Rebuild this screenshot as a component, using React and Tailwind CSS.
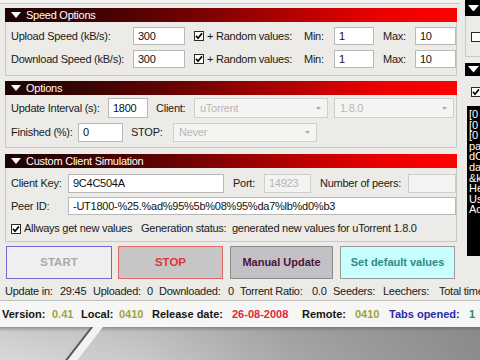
import React from "react";

const Tri = ({ size = 10 }) => (
  <svg width={size} height={size * 0.6} viewBox="0 0 10 6" className="shrink-0">
    <path d="M0 0H10L5 6Z" fill="#fff" />
  </svg>
);

const Check = ({ checked }) => (
  <div className="w-[10px] h-[10px] border border-[#2a2a2a] bg-white flex items-center justify-center shrink-0">
    {checked && (
      <svg width="8" height="8" viewBox="0 0 8 8">
        <path d="M1 3.8L3 6.2L7 1.4" stroke="#000" strokeWidth="1.7" fill="none" />
      </svg>
    )}
  </div>
);

const Header = ({ title }) => (
  <div className="h-[14px] flex items-center pl-[6px] gap-[5px] text-white bg-[linear-gradient(to_right,#1c0202_0%,#3a0303_18%,#6e0202_40%,#b00000_62%,#e80000_82%,#ff0000_100%)]">
    <Tri />
    <span className="leading-none">{title}</span>
  </div>
);

const Input = ({ w, h = 18, children, disabled }) => (
  <div
    className={
      "shrink-0 border flex items-center pl-[4px] leading-none " +
      (disabled
        ? "bg-[#f3f3f1] border-[#cfcfcf] text-[#b4b4b4]"
        : "bg-white border-[#b8b8b8] text-[#111]")
    }
    style={{ width: w, height: h }}
  >
    {children}
  </div>
);

const Select = ({ w, h = 19, children }) => (
  <div
    className="shrink-0 border border-[#d0d0d0] bg-[#f4f4f2] text-[#b8b8b8] flex items-center pl-[5px] pr-[6px] leading-none justify-between"
    style={{ width: w, height: h }}
  >
    <span>{children}</span>
    <svg width="5" height="3" viewBox="0 0 5 3">
      <path d="M0 0H5L2.5 3Z" fill="#a8a8a8" />
    </svg>
  </div>
);

const Lbl = ({ w, children, className = "" }) => (
  <span className={"shrink-0 leading-none whitespace-nowrap " + className} style={{ width: w }}>
    {children}
  </span>
);

const Body = ({ children, className = "" }) => (
  <div className={"border border-t-0 border-[#c9c8c4] bg-[#ecebe7] px-[5px] flex flex-col " + className}>
    {children}
  </div>
);

const statusItems = [
  ["Update in:", 55],
  ["29:45", 33],
  ["Uploaded:", 54],
  ["0", 12],
  ["Downloaded:", 69],
  ["0", 12],
  ["Torrent Ratio:", 72],
  ["0.0", 21],
  ["Seeders:", 50],
  ["Leechers:", 56],
  ["Total time", 60],
];

const versionItems = [
  ["Version:", 50, "text-[#151515]"],
  ["0.41", 29, "text-[#a2a23a]"],
  ["Local:", 38, "text-[#151515]"],
  ["0410", 33, "text-[#a2a23a]"],
  ["Release date:", 80, "text-[#151515]"],
  ["26-08-2008", 70, "text-[#e0283a]"],
  ["Remote:", 53, "text-[#151515]"],
  ["0410", 34, "text-[#a2a23a]"],
  ["Tabs opened:", 80, "text-[#2a2aa8]"],
  ["1", 10, "text-[#2a8a6a]"],
];

export default function App() {
  return (
    <div className="w-[480px] h-[360px] overflow-hidden bg-[#ecebe7] flex flex-col font-['Liberation_Sans',Arial,sans-serif] text-[11px] tracking-[-0.25px] text-[#1a1a1a]">
      <div className="flex h-[280px] shrink-0">
        {/* Left column */}
        <div className="w-[460px] shrink-0 flex flex-col pl-[5px] pr-[3px]">
          <div className="h-[4px] -ml-[5px] -mr-[3px] border-b border-[#c9c8c4] bg-[#f2f2f0]" />
          <div className="mt-[4px]">
            <Header title="Speed Options" />
            <Body className="pt-[5px] pb-[7px] gap-[5px]">
              {["Upload Speed (kB/s):", "Download Speed (kB/s):"].map((l) => (
                <div key={l} className="flex items-center h-[18px]">
                  <Lbl w={122}>{l}</Lbl>
                  <Input w={52}>300</Input>
                  <div className="ml-[9px]">
                    <Check checked />
                  </div>
                  <Lbl w={97} className="ml-[3px]">+ Random values:</Lbl>
                  <Lbl w={30}>Min:</Lbl>
                  <Input w={40}>1</Input>
                  <Lbl w={32} className="ml-[9px]">Max:</Lbl>
                  <Input w={41}>10</Input>
                </div>
              ))}
            </Body>
          </div>

          <div className="mt-[5px]">
            <Header title="Options" />
            <Body className="pt-[3px] pb-[5px] gap-[5px]">
              <div className="flex items-center h-[20px]">
                <Lbl w={97}>Update Interval (s):</Lbl>
                <Input w={40} h={20}>1800</Input>
                <Lbl w={38} className="ml-[8px]">Client:</Lbl>
                <Select w={134} h={20}>uTorrent</Select>
                <div className="ml-[6px]">
                  <Select w={120} h={20}>1.8.0</Select>
                </div>
              </div>
              <div className="flex items-center h-[19px]">
                <Lbl w={67}>Finished (%):</Lbl>
                <Input w={45} h={19}>0</Input>
                <Lbl w={42} className="ml-[8px]">STOP:</Lbl>
                <Select w={144} h={19}>Never</Select>
              </div>
            </Body>
          </div>

          <div className="mt-[6px]">
            <Header title="Custom Client Simulation" />
            <Body className="pt-[6px] pb-[4px]">
              <div className="flex items-center h-[19px]">
                <Lbl w={57}>Client Key:</Lbl>
                <Input w={156} h={19}>9C4C504A</Input>
                <Lbl w={31} className="ml-[9px]">Port:</Lbl>
                <Input w={47} h={19} disabled>14923</Input>
                <Lbl w={88} className="ml-[9px]">Number of peers:</Lbl>
                <Input w={48} h={19} disabled></Input>
              </div>
              <div className="flex items-center h-[18px] mt-[4px]">
                <Lbl w={57}>Peer ID:</Lbl>
                <Input w={388} h={18}>-UT1800-%25.%ad%95%5b%08%95%da7%lb%d0%b3</Input>
              </div>
              <div className="flex items-center h-[17px] mt-[5px]">
                <Check checked />
                <Lbl w={117} className="ml-[3px]">Allways get new values</Lbl>
                <Lbl>Generation status:&nbsp; generated new values for uTorrent 1.8.0</Lbl>
              </div>
            </Body>
          </div>

          <div className="flex mt-[4px] h-[33px] font-bold tracking-normal">
            <div className="ml-[1px] w-[106px] border border-[#6c6cd0] bg-[#efefef] text-[#a9a9a9] flex items-center justify-center text-[11.5px]">
              START
            </div>
            <div className="ml-[6px] w-[105px] border border-[#e06868] bg-[#c6c6c6] text-[#e4303c] flex items-center justify-center text-[11.5px]">
              STOP
            </div>
            <div className="ml-[7px] w-[103px] border border-[#8c8a8c] bg-[#c3c1c3] text-[#4a1242] flex items-center justify-center">
              Manual Update
            </div>
            <div className="ml-[7px] w-[115px] border border-[#9a9a9a] bg-[#c9fefe] text-[#2a8c84] flex items-center justify-center">
              Set default values
            </div>
          </div>
        </div>

        {/* Right column */}
        <div className="flex-1 flex flex-col pl-[5px] overflow-hidden">
          <div className="h-[16px] bg-black flex items-center pl-[3px]">
            <Tri size={11} />
          </div>
          <div className="h-[41px] border-l border-b border-[#c9c8c4] pl-[5px] pt-[16px]">
            <Check />
          </div>
          <div className="mt-[6px] h-[13px] bg-black flex items-center pl-[3px]">
            <Tri size={11} />
          </div>
          <div className="pl-[6px] pt-[11px] h-[30px]">
            <Check checked />
          </div>
          <div className="ml-[2px] h-[150px] bg-black text-white text-[11px] leading-[11px] pl-[2px] pt-[3px] tracking-normal whitespace-nowrap overflow-hidden">
            {["[0", "[0", "[0", "pa", "dC", "da", "&k", "He", "Us", "Ac"].map((t, i) => (
              <div key={i} className="h-[10.6px]">{t}</div>
            ))}
          </div>
        </div>
      </div>

      {/* status line */}
      <div className="h-[20px] shrink-0 flex items-center pl-[5px] whitespace-nowrap text-[#202020] pt-[2px]">
        {statusItems.map(([t, w], i) => (
          <span key={i} className="shrink-0" style={{ width: w }}>
            {t}
          </span>
        ))}
      </div>

      {/* version bar */}
      <div className="h-[27px] shrink-0 border-t border-[#bdbcb8] bg-[#f6f6f4] flex items-center pl-[2px] font-bold tracking-normal whitespace-nowrap text-[11px]">
        {versionItems.map(([t, w, c], i) => (
          <span key={i} className={"shrink-0 " + c} style={{ width: w }}>
            {t}
          </span>
        ))}
      </div>

      {/* background photo */}
      <div className="flex-1 relative">
        <svg width="480" height="40" viewBox="0 0 480 40" className="block">
          <defs>
            <linearGradient id="bgx" x1="0" y1="0" x2="1" y2="0">
              <stop offset="0" stopColor="#dcdcdc" />
              <stop offset="0.3" stopColor="#cbcbcb" />
              <stop offset="0.6" stopColor="#a9a9a9" />
              <stop offset="1" stopColor="#8d8d8d" />
            </linearGradient>
            <linearGradient id="bgy" x1="0" y1="0" x2="0" y2="1">
              <stop offset="0" stopColor="#555" stopOpacity="0.55" />
              <stop offset="0.12" stopColor="#777" stopOpacity="0.15" />
              <stop offset="1" stopColor="#777" stopOpacity="0" />
            </linearGradient>
          </defs>
          <rect width="480" height="40" fill="url(#bgx)" />
          <rect width="480" height="40" fill="url(#bgy)" />
          <polygon points="93,0 103,0 72,40 62,40" fill="#f2f2f2" />
          <line x1="92" y1="0" x2="61" y2="40" stroke="#5a5a5a" strokeWidth="2" />
        </svg>
      </div>
    </div>
  );
}
